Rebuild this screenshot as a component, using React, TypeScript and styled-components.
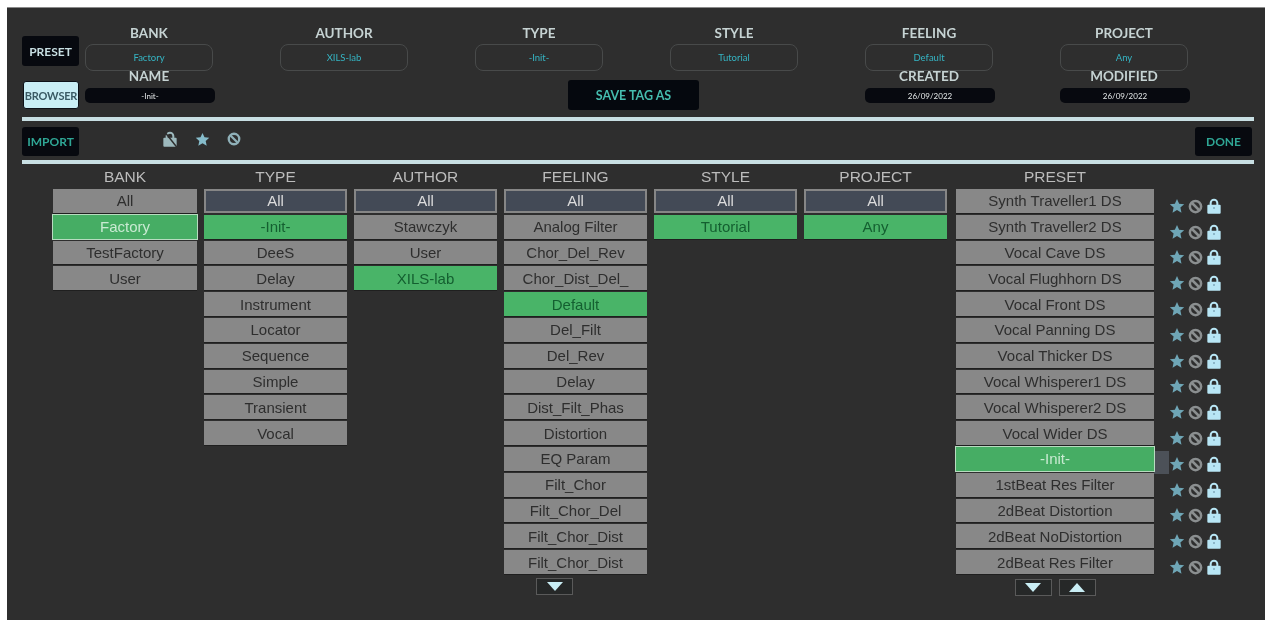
import React from 'react';
import styled, { createGlobalStyle } from 'styled-components';

const TAGS = [
  { label: 'BANK', value: 'Factory' },
  { label: 'AUTHOR', value: 'XILS-lab' },
  { label: 'TYPE', value: '-Init-' },
  { label: 'STYLE', value: 'Tutorial' },
  { label: 'FEELING', value: 'Default' },
  { label: 'PROJECT', value: 'Any' },
];

const COLUMNS = [
  { title: 'BANK', isBank: true, selected: 'Factory', items: ['All', 'Factory', 'TestFactory', 'User'] },
  {
    title: 'TYPE',
    selected: '-Init-',
    items: ['All', '-Init-', 'DeeS', 'Delay', 'Instrument', 'Locator', 'Sequence', 'Simple', 'Transient', 'Vocal'],
  },
  { title: 'AUTHOR', selected: 'XILS-lab', items: ['All', 'Stawczyk', 'User', 'XILS-lab'] },
  {
    title: 'FEELING',
    selected: 'Default',
    down: true,
    items: [
      'All',
      'Analog Filter',
      'Chor_Del_Rev',
      'Chor_Dist_Del_',
      'Default',
      'Del_Filt',
      'Del_Rev',
      'Delay',
      'Dist_Filt_Phas',
      'Distortion',
      'EQ Param',
      'Filt_Chor',
      'Filt_Chor_Del',
      'Filt_Chor_Dist',
      'Filt_Chor_Dist',
    ],
  },
  { title: 'STYLE', selected: 'Tutorial', items: ['All', 'Tutorial'] },
  { title: 'PROJECT', selected: 'Any', items: ['All', 'Any'] },
];

const PRESETS = [
  'Synth Traveller1 DS',
  'Synth Traveller2 DS',
  'Vocal Cave DS',
  'Vocal Flughhorn DS',
  'Vocal Front DS',
  'Vocal Panning DS',
  'Vocal Thicker DS',
  'Vocal Whisperer1 DS',
  'Vocal Whisperer2 DS',
  'Vocal Wider DS',
  '-Init-',
  '1stBeat Res Filter',
  '2dBeat Distortion',
  '2dBeat NoDistortion',
  '2dBeat Res Filter',
];

const StarIcon = ({ size, color }: { size: number; color: string }) => (
  <svg width={size} height={size} viewBox="0 0 24 24">
    <path fill={color} d="M12 1.500l3.200 7 7.600.8-5.700 5.100 1.600 7.600L12 18.100 5.300 22l1.600-7.600-5.700-5.100 7.600-.8z" />
  </svg>
);

const BanIcon = ({ size, color }: { size: number; color: string }) => (
  <svg width={size} height={size} viewBox="0 0 24 24" fill="none" stroke={color} strokeWidth="4">
    <circle cx="12" cy="12" r="9" />
    <path d="M6 6l12 12" />
  </svg>
);

const LockIcon = ({ size, color, crossed }: { size: number; color: string; crossed?: boolean }) => (
  <svg width={size} height={size} viewBox="0 0 24 24">
    <path fill="none" stroke={color} strokeWidth="3" d="M7 12V7.500a5 5 0 0 1 10 0V12" />
    <rect x="2" y="10" width="20" height="13.500" rx="1.500" fill={color} />
    {crossed ? (
      <path stroke="#2e2e2e" strokeWidth="2.200" d="M3 0l19 24" />
    ) : (
      <circle cx="12" cy="15" r="1.500" fill="#7fa9bb" />
    )}
  </svg>
);

const Triangle = ({ up }: { up?: boolean }) => (
  <svg width="16" height="9" viewBox="0 0 16 9">
    <path fill="#c9eef5" d={up ? 'M8 0l8 9H0z' : 'M0 0h16L8 9z'} />
  </svg>
);

const cellVariant = (item: string, col: (typeof COLUMNS)[number]) => {
  if (item === col.selected) return col.isBank ? 'glow' : 'picked';
  if (item === 'All' && !col.isBank) return 'all';
  return 'plain';
};

export default function App() {
  return (
    <>
      <GlobalStyle />
      <Panel>
        <TopSection>
          <ModeButtons>
            <DarkButton>PRESET</DarkButton>
            <LightButton>BROWSER</LightButton>
          </ModeButtons>
          <TagGrid>
            {TAGS.map((tag) => (
              <TagCell key={tag.label}>
                <TagLabel>{tag.label}</TagLabel>
                <TagPill>{tag.value}</TagPill>
              </TagCell>
            ))}
            <TagCell>
              <TagLabel>NAME</TagLabel>
              <InfoPill>-Init-</InfoPill>
            </TagCell>
            <SaveCell>
              <SaveButton>SAVE TAG AS</SaveButton>
            </SaveCell>
            <TagCell>
              <TagLabel>CREATED</TagLabel>
              <InfoPill>26/09/2022</InfoPill>
            </TagCell>
            <TagCell>
              <TagLabel>MODIFIED</TagLabel>
              <InfoPill>26/09/2022</InfoPill>
            </TagCell>
          </TagGrid>
        </TopSection>
        <Divider />
        <ActionBar>
          <ActionButton>IMPORT</ActionButton>
          <FilterIcons>
            <LockIcon size={16} color="#9db9bd" crossed />
            <StarIcon size={15} color="#86bccb" />
            <BanIcon size={14} color="#8fb0b8" />
          </FilterIcons>
          <ActionButton>DONE</ActionButton>
        </ActionBar>
        <Divider />
        <Browser>
          {COLUMNS.map((col) => (
            <Column key={col.title} $wide={col.isBank}>
              <ColumnTitle>{col.title}</ColumnTitle>
              <List>
                {col.items.map((item, i) => (
                  <Cell key={item + i} $variant={cellVariant(item, col)}>
                    {item}
                  </Cell>
                ))}
              </List>
              {col.down && (
                <Pager>
                  <ArrowButton>
                    <Triangle />
                  </ArrowButton>
                </Pager>
              )}
            </Column>
          ))}
          <PresetColumn>
            <PresetTitle>PRESET</PresetTitle>
            <List>
              {PRESETS.map((preset) => (
                <PresetRow key={preset}>
                  <Cell $variant={preset === '-Init-' ? 'glow' : 'plain'}>{preset}</Cell>
                  <ScrollMark $show={preset === '-Init-'} />
                  <RowIcons>
                    <StarIcon size={16} color="#6fa6b6" />
                    <BanIcon size={15} color="#8b8f90" />
                    <LockIcon size={16} color="#b8e6f5" />
                  </RowIcons>
                </PresetRow>
              ))}
            </List>
            <PresetPager>
              <ArrowButton>
                <Triangle />
              </ArrowButton>
              <ArrowButton>
                <Triangle up />
              </ArrowButton>
            </PresetPager>
          </PresetColumn>
        </Browser>
      </Panel>
    </>
  );
}

const GlobalStyle = createGlobalStyle`
  html, body {
    margin: 0;
    height: 100%;
    background: #fff;
    overflow: hidden;
  }
  * {
    box-sizing: border-box;
  }
`;

const Panel = styled.div`
  margin: 7px 0 0 7px;
  height: 613px;
  padding: 0 11px 0 15px;
  background-color: #2e2e2e;
  border-top: 1px solid #8a8a8a;
  font-family: 'Liberation Sans', Arial, sans-serif;
  overflow: hidden;
`;

const TopSection = styled.div`
  display: flex;
  height: 109px;
  padding-top: 20px;
`;

const ModeButtons = styled.div`
  width: 63px;
  display: flex;
  flex-direction: column;
  gap: 15px;
  padding-top: 8px;
`;

const DarkButton = styled.div`
  width: 57px;
  height: 30px;
  display: flex;
  align-items: center;
  justify-content: center;
  background-color: #07090f;
  border-radius: 3px;
  color: #c8dfe3;
  font-family: Lato, sans-serif;
  font-weight: 700;
  font-size: 12px;
  filter: blur(0.3px);
`;

const LightButton = styled(DarkButton)`
  width: 56px;
  height: 28px;
  margin-left: 1px;
  background-color: #c9eef5;
  border: 1px solid #0d1118;
  color: #3a5a64;
  font-size: 11px;
  letter-spacing: -0.2px;
  white-space: nowrap;
`;

const TagGrid = styled.div`
  display: grid;
  grid-template-columns: repeat(6, 128px);
  grid-auto-rows: 43px;
  column-gap: 67px;
`;

const TagCell = styled.div`
  display: flex;
  flex-direction: column;
  align-items: stretch;
`;

const TagLabel = styled.div`
  height: 10px;
  line-height: 10px;
  margin-bottom: 6px;
  text-align: center;
  color: #c6d3d3;
  font-family: Lato, sans-serif;
  font-weight: 700;
  font-size: 13.5px;
  white-space: nowrap;
  filter: blur(0.4px);
`;

const TagPill = styled.div`
  height: 27px;
  display: flex;
  align-items: center;
  justify-content: center;
  border: 1.5px solid #484a4a;
  border-radius: 8px;
  color: #35b5c4;
  font-family: Lato, sans-serif;
  font-size: 9.5px;
  filter: blur(0.5px);
`;

const InfoPill = styled.div`
  width: 130px;
  height: 15px;
  margin-top: 1px;
  display: flex;
  align-items: center;
  justify-content: center;
  background-color: #07090f;
  border-radius: 5px;
  color: #e4e8e8;
  font-family: Lato, sans-serif;
  font-size: 8px;
  filter: blur(0.4px);
`;

const SaveCell = styled.div`
  grid-column: 3 / 5;
  display: flex;
  justify-content: center;
  padding-right: 6px;
`;

const SaveButton = styled.div`
  width: 131px;
  height: 30px;
  margin-top: 9px;
  display: flex;
  align-items: center;
  justify-content: center;
  background-color: #05080e;
  border-radius: 3px;
  color: #45bcae;
  font-family: Lato, sans-serif;
  font-weight: 700;
  font-size: 12.5px;
  filter: blur(0.3px);
`;

const Divider = styled.div`
  width: 1232px;
  height: 4px;
  background-color: #c8dfe3;
`;

const ActionBar = styled.div`
  width: 1230px;
  height: 39px;
  padding-top: 6px;
  display: flex;
  align-items: flex-start;
  justify-content: space-between;
`;

const ActionButton = styled.div`
  width: 57px;
  height: 29px;
  display: flex;
  align-items: center;
  justify-content: center;
  background-color: #07090f;
  border-radius: 3px;
  color: #2fa695;
  font-family: Lato, sans-serif;
  font-weight: 700;
  font-size: 12px;
  filter: blur(0.3px);
`;

const FilterIcons = styled.div`
  flex: 1;
  display: flex;
  align-items: center;
  gap: 17px;
  padding: 4px 0 0 83px;
`;

const Browser = styled.div`
  display: flex;
  gap: 7px;
  padding: 4px 0 0 31px;
`;

const Column = styled.div<{ $wide?: boolean }>`
  width: ${(p) => (p.$wide ? '144px' : '143px')};
`;

const ColumnTitle = styled.div`
  height: 21px;
  line-height: 18px;
  text-align: center;
  color: #bcbcbc;
  font-size: 15.5px;
  filter: blur(0.3px);
`;

const PresetColumn = styled.div`
  margin-left: 2px;
`;

const PresetTitle = styled(ColumnTitle)`
  width: 198px;
`;

const List = styled.div`
  display: flex;
  flex-direction: column;
  gap: 2px;
`;

const CELL_COLORS = {
  plain: 'background-color: #888; color: #2e2e2e; box-shadow: 0 1px 0 #1f1f1f;',
  all: 'background-color: #434a56; color: #dcdcdc; border: 2px solid #868686;',
  glow: 'background-color: #46ad64; color: #c9ead2; border: 1px solid #b8dcc0; margin: -1px -1px; height: 25.8px; width: calc(100% + 2px);',
  picked: 'background-color: #49b468; color: #145f30; box-shadow: 0 1px 0 #1f1f1f;',
};

const Cell = styled.div<{ $variant: keyof typeof CELL_COLORS }>`
  height: 23.8px;
  display: flex;
  align-items: center;
  justify-content: center;
  font-size: 15px;
  white-space: nowrap;
  filter: blur(0.4px);
  ${(p) => CELL_COLORS[p.$variant]}
`;

const PresetRow = styled.div`
  height: 23.8px;
  display: grid;
  grid-template-columns: 198px 15px auto;
`;

const ScrollMark = styled.div<{ $show: boolean }>`
  height: 23px;
  margin-top: 4px;
  background-color: ${(p) => (p.$show ? '#4c5158' : 'transparent')};
`;

const RowIcons = styled.div`
  height: 24.8px;
  display: flex;
  align-items: flex-end;
  gap: 3px;
  padding-left: 0;
`;

const Pager = styled.div`
  display: flex;
  margin: 4px 0 0 32px;
`;

const PresetPager = styled.div`
  width: 198px;
  display: flex;
  justify-content: center;
  gap: 7px;
  margin-top: 5px;
`;

const ArrowButton = styled.div`
  width: 37px;
  height: 17px;
  display: flex;
  align-items: center;
  justify-content: center;
  background-color: #262828;
  border: 1px solid #5a5a5a;
`;
